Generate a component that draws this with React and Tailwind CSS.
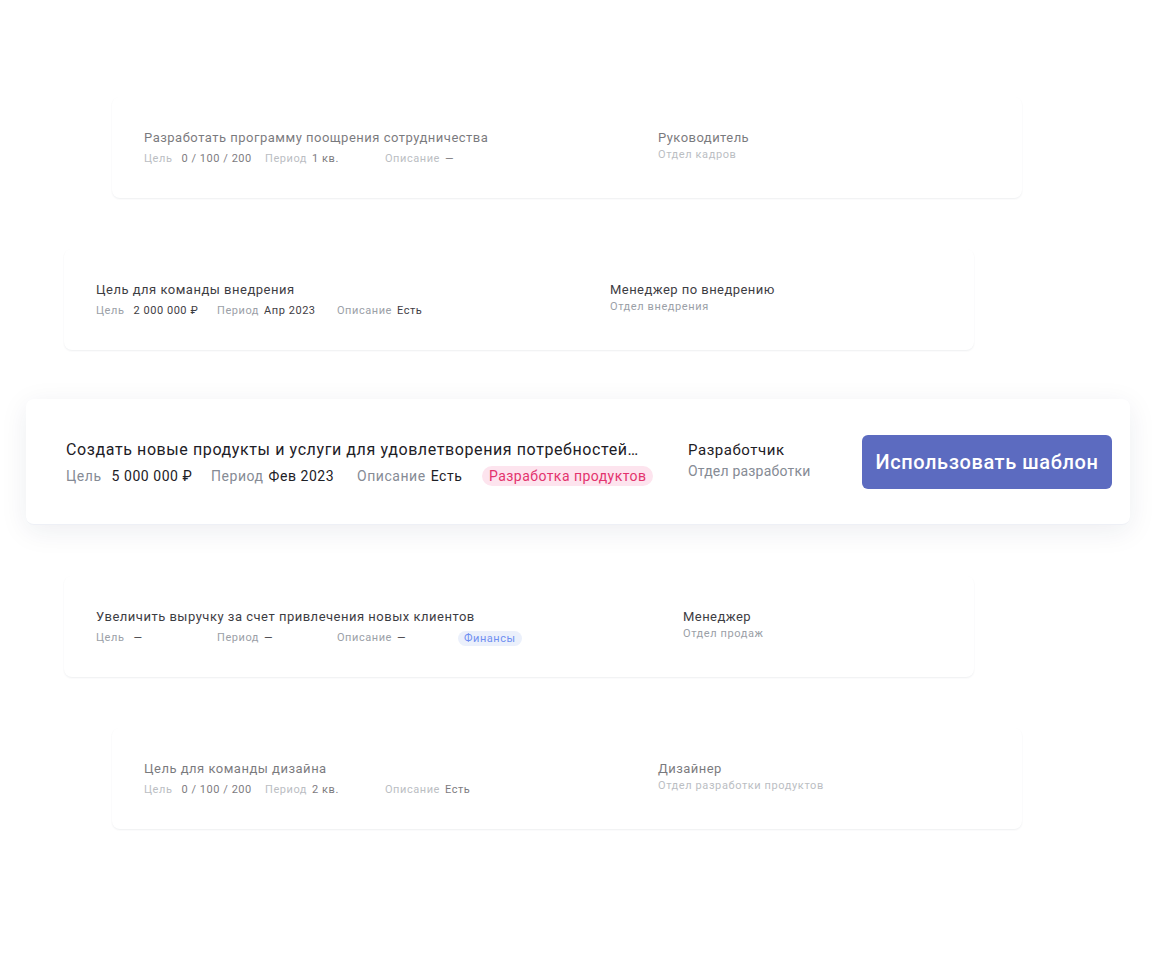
import React from "react";

const font = { fontFamily: "Roboto, 'Noto Sans', 'Liberation Sans', sans-serif" };

function SmallCard({ className, fade, title, items, tag, role, dept, leftW }) {
  return (
    <div
      className={
        "w-[910px] h-[101px] rounded-[8px] bg-white shadow-[0_1px_2px_rgba(20,30,60,0.07)] flex pl-[32px] pt-[33px] tracking-[0.45px] " +
        className
      }
    >
      <div className={"flex " + (fade ? "opacity-60" : "opacity-[0.88]")}>
        <div className="flex flex-col" style={{ width: leftW }}>
          <div className="text-[13px] leading-[16px] text-[#1f2329] tracking-[0.5px]">{title}</div>
          <div className="flex items-center mt-[5px] text-[11px] leading-[16px] tracking-[0.55px]">
            {items.map((it, i) => (
              <div key={i} className={"flex items-center " + it.w}>
                <span className="text-[#8e939b]">{it.label}</span>
                <span className={"text-[#1f2329] " + (i === 0 ? "ml-[9px]" : "ml-[5px]")}>{it.value}</span>
              </div>
            ))}
            {tag && (
              <span className="h-[15px] px-[6px] rounded-full bg-[#e9effb] text-[#5b7ff0] text-[11px] leading-[15px]">
                {tag}
              </span>
            )}
          </div>
        </div>
        <div className="flex flex-col">
          <div className="text-[13px] leading-[16px] text-[#1f2329]">{role}</div>
          <div className="text-[11px] leading-[14px] text-[#8e939b] mt-[2px] tracking-[0.6px]">{dept}</div>
        </div>
      </div>
    </div>
  );
}

export default function App() {
  const smallItems = (a, b, c) => [
    { label: "Цель", value: a, w: "w-[121px]" },
    { label: "Период", value: b, w: "w-[120px]" },
    { label: "Описание", value: c, w: "w-[121px]" },
  ];
  return (
    <div className="w-[1152px] h-[976px] bg-white flex flex-col pt-[97px]" style={font}>
      <SmallCard
        className="ml-[112px]"
        fade
        leftW="514px"
        title="Разработать программу поощрения сотрудничества"
        items={smallItems("0 / 100 / 200", "1 кв.", "—")}
        role="Руководитель"
        dept="Отдел кадров"
      />
      <SmallCard
        className="ml-[64px] mt-[51px]"
        leftW="514px"
        title="Цель для команды внедрения"
        items={smallItems("2 000 000 ₽", "Апр 2023", "Есть")}
        role="Менеджер по внедрению"
        dept="Отдел внедрения"
      />

      <div className="ml-[26px] mt-[49px] w-[1104px] h-[126px] rounded-[8px] bg-white border-b border-[#eef0f6] shadow-[0_6px_28px_rgba(30,40,80,0.08)] flex items-center pl-[40px] pr-[18px] tracking-[0.55px]">
        <div className="w-[622px] flex flex-col mt-[2px]">
          <div className="text-[16px] leading-[20px] text-[#1d2026] whitespace-nowrap tracking-[0.6px]">
            Создать новые продукты и услуги для удовлетворения потребностей…
          </div>
          <div className="flex items-center mt-[6px] text-[14px] leading-[20px]">
            <div className="w-[145px] flex items-center">
              <span className="text-[#868b95]">Цель</span>
              <span className="ml-[10px] text-[#1d2026]">5 000 000 ₽</span>
            </div>
            <div className="w-[146px] flex items-center">
              <span className="text-[#868b95]">Период</span>
              <span className="ml-[5px] text-[#1d2026]">Фев 2023</span>
            </div>
            <div className="w-[125px] flex items-center">
              <span className="text-[#868b95]">Описание</span>
              <span className="ml-[5px] text-[#1d2026]">Есть</span>
            </div>
            <span className="h-[20px] px-[7px] rounded-full bg-[#fde4ee] text-[#e3336d] text-[14px] leading-[20px] tracking-[0.45px]">
              Разработка продуктов
            </span>
          </div>
        </div>
        <div className="flex flex-col self-start mt-[41px]">
          <div className="text-[15px] leading-[20px] text-[#1d2026]">Разработчик</div>
          <div className="text-[14px] leading-[20px] text-[#868b95] mt-[1px] tracking-[0.2px]">Отдел разработки</div>
        </div>
        <button className="ml-auto w-[250px] h-[54px] rounded-[6px] bg-[#5c6bc0] text-white text-[20px] font-medium tracking-[0.6px] flex items-center justify-center">
          Использовать шаблон
        </button>
      </div>

      <SmallCard
        className="ml-[64px] mt-[51px]"
        leftW="587px"
        title="Увеличить выручку за счет привлечения новых клиентов"
        items={smallItems("—", "—", "—")}
        tag="Финансы"
        role="Менеджер"
        dept="Отдел продаж"
      />
      <SmallCard
        className="ml-[112px] mt-[51px]"
        fade
        leftW="514px"
        title="Цель для команды дизайна"
        items={smallItems("0 / 100 / 200", "2 кв.", "Есть")}
        role="Дизайнер"
        dept="Отдел разработки продуктов"
      />
    </div>
  );
}
